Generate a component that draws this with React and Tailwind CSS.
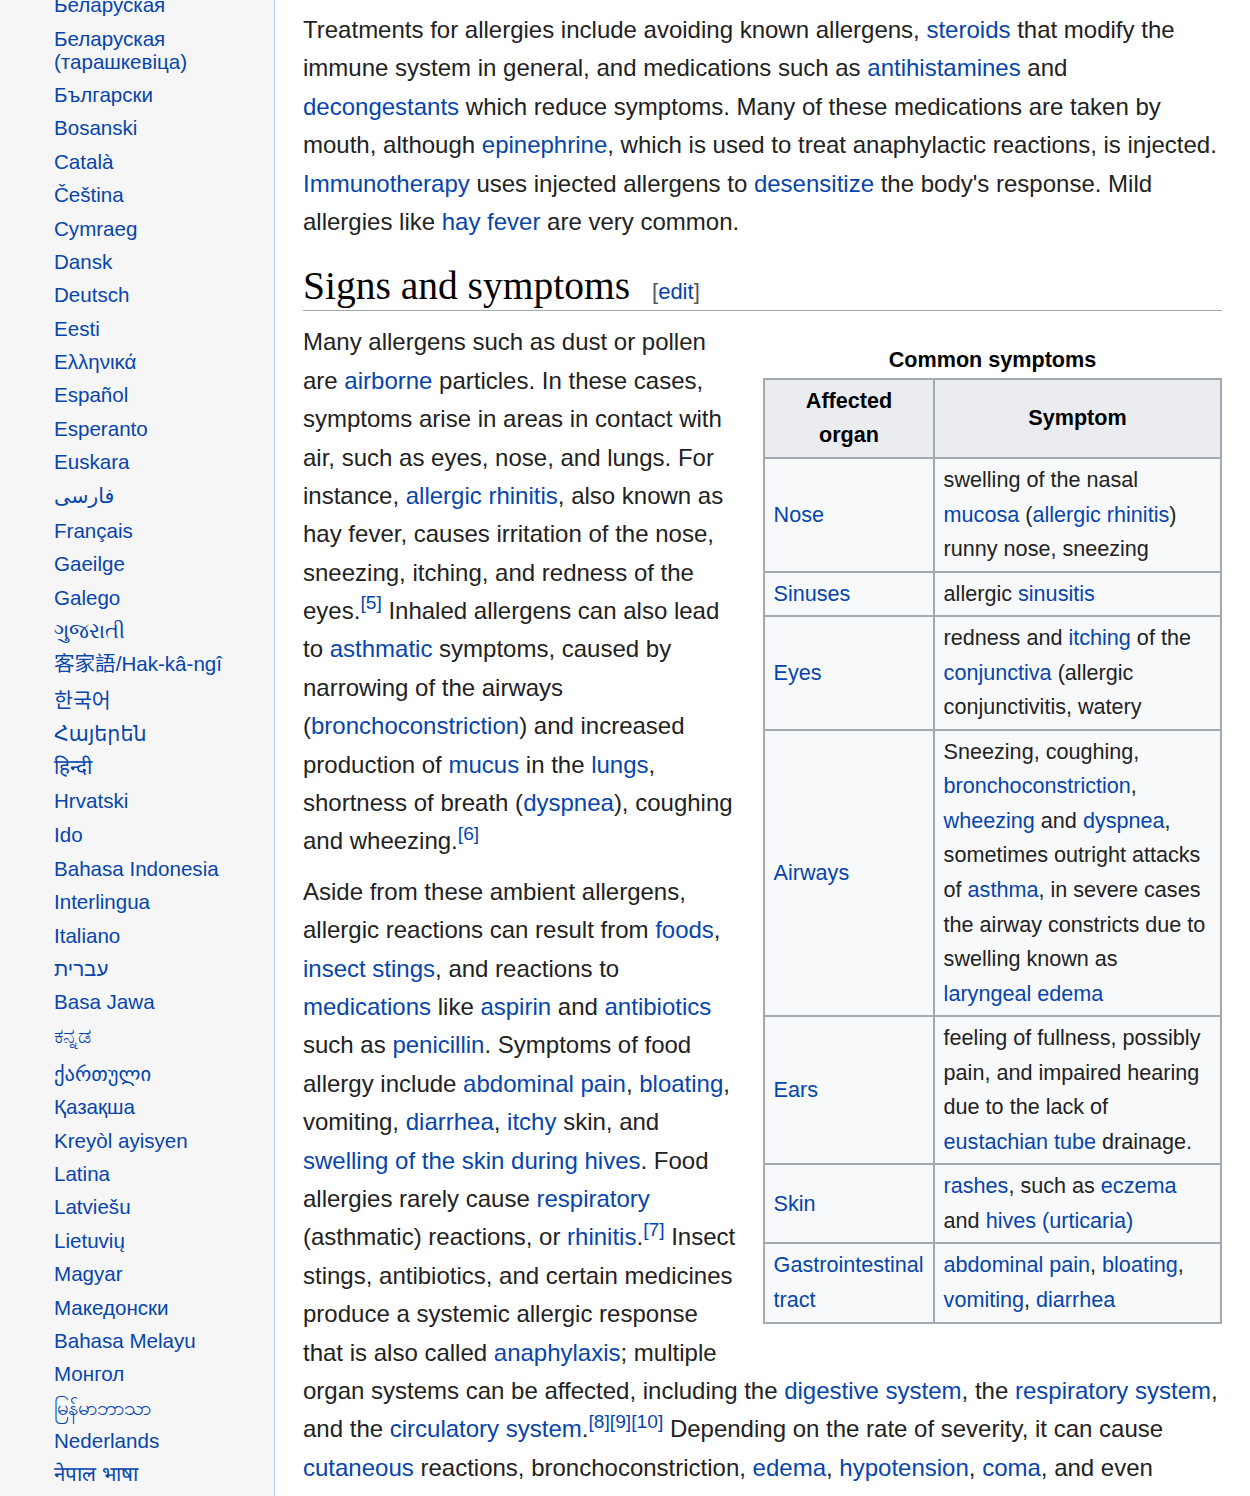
const languages = [
  { name: "Беларуская" },
  { name: "Беларуская (тарашкевіца)" },
  { name: "Български" },
  { name: "Bosanski" },
  { name: "Català" },
  { name: "Čeština" },
  { name: "Cymraeg" },
  { name: "Dansk" },
  { name: "Deutsch" },
  { name: "Eesti" },
  { name: "Ελληνικά" },
  { name: "Español" },
  { name: "Esperanto" },
  { name: "Euskara" },
  { name: "فارسی", cls: "pb-[7px]" },
  { name: "Français" },
  { name: "Gaeilge" },
  { name: "Galego" },
  { name: "ગુજરાતી" },
  { name: "客家語/Hak-kâ-ngî", cls: "pb-[8px]" },
  { name: "한국어" },
  { name: "Հայերեն" },
  { name: "हिन्दी" },
  { name: "Hrvatski", cls: "pb-[6.5px]" },
  { name: "Ido" },
  { name: "Bahasa Indonesia" },
  { name: "Interlingua" },
  { name: "Italiano" },
  { name: "עברית" },
  { name: "Basa Jawa" },
  { name: "ಕನ್ನಡ", cls: "pb-[10px]" },
  { name: "ქართული" },
  { name: "Қазақша" },
  { name: "Kreyòl ayisyen" },
  { name: "Latina" },
  { name: "Latviešu" },
  { name: "Lietuvių" },
  { name: "Magyar" },
  { name: "Македонски" },
  { name: "Bahasa Melayu" },
  { name: "Монгол" },
  { name: "မြန်မာဘာသာ" },
  { name: "Nederlands" },
  { name: "नेपाल भाषा" },
];

const L = ({ children }) => <a href="#" className="text-[#0645ad]">{children}</a>;

const Ref = ({ n }) => (
  <sup className="text-[80%] text-[#0645ad]">
    <a href="#">[{n}]</a>
  </sup>
);

const rows = [
  {
    organ: <L>Nose</L>,
    symptom: (
      <>
        swelling of the nasal <L>mucosa</L> (<L>allergic rhinitis</L>) runny nose, sneezing
      </>
    ),
  },
  { organ: <L>Sinuses</L>, symptom: <>allergic <L>sinusitis</L></> },
  {
    organ: <L>Eyes</L>,
    symptom: (
      <>
        redness and <L>itching</L> of the <L>conjunctiva</L> (allergic conjunctivitis, watery
      </>
    ),
  },
  {
    organ: <L>Airways</L>,
    symptom: (
      <>
        Sneezing, coughing, <L>bronchoconstriction</L>, <L>wheezing</L> and <L>dyspnea</L>,
        sometimes outright attacks of <L>asthma</L>, in severe cases the airway constricts due to
        swelling known as <L>laryngeal edema</L>
      </>
    ),
  },
  {
    organ: <L>Ears</L>,
    symptom: (
      <>
        feeling of fullness, possibly pain, and impaired hearing due to the lack of{" "}
        <L>eustachian tube</L> drainage.
      </>
    ),
  },
  {
    organ: <L>Skin</L>,
    symptom: (
      <>
        <L>rashes</L>, such as <L>eczema</L> and <L>hives (urticaria)</L>
      </>
    ),
  },
  {
    organ: <L>Gastrointestinal tract</L>,
    symptom: (
      <>
        <L>abdominal pain</L>, <L>bloating</L>, <L>vomiting</L>, <L>diarrhea</L>
      </>
    ),
  },
];

const SymptomTable = () => (
  <div className="float-right ml-[21.6px] mt-[20px] mb-[10.8px]">
    <table className="w-[459px] table-fixed border-collapse text-[21.6px] leading-[1.6] text-[#222]">
      <caption className="font-bold text-black">Common symptoms</caption>
      <colgroup>
        <col className="w-[170px]" />
        <col />
      </colgroup>
      <thead>
        <tr className="bg-[#eaecf0] text-black">
          <th className="border-2 border-[#a2a9b1] px-[9.6px] py-[4px] font-bold">
            Affected
            <br />
            organ
          </th>
          <th className="border-2 border-[#a2a9b1] px-[9.6px] py-[4px] font-bold">Symptom</th>
        </tr>
      </thead>
      <tbody>
        {rows.map((r, i) => (
          <tr key={i} className="bg-[#f8f9fa]">
            <td className="border-2 border-[#a2a9b1] pl-[8.6px] pr-[9.6px] py-[4px]">{r.organ}</td>
            <td className="border-2 border-[#a2a9b1] pl-[8.6px] pr-[10px] py-[4px]">{r.symptom}</td>
          </tr>
        ))}
      </tbody>
    </table>
  </div>
);

export default function App() {
  return (
    <div className="flex h-[1496px] overflow-hidden bg-white font-['Liberation_Sans','DejaVu_Sans','Noto_Sans_CJK_SC',sans-serif]">
      <aside className="w-[275px] shrink-0 border-r border-[#a7d7f9] bg-[#f6f6f6]">
        <ul className="-mt-[12px] pl-[54px] pr-[20px] text-[20.57px] leading-[1.125]">
          {languages.map((lang) => (
            <li key={lang.name} className={lang.cls ? `pt-[5.14px] ${lang.cls}` : "py-[5.14px]"}>
              <a href="#" className="text-[#0645ad]">
                {lang.name}
              </a>
            </li>
          ))}
        </ul>
      </aside>

      <main className="min-w-0 flex-1 px-[28px] text-[24px] leading-[1.6] text-[#222]">
        <p className="mt-[11px] mb-3">
          Treatments for allergies include avoiding known allergens, <L>steroids</L> that modify the
          immune system in general, and medications such as <L>antihistamines</L> and{" "}
          <L>decongestants</L> which reduce symptoms. Many of these medications are taken by mouth,
          although <L>epinephrine</L>, which is used to treat anaphylactic reactions, is injected.{" "}
          <L>Immunotherapy</L> uses injected allergens to <L>desensitize</L> the body's response.
          Mild allergies like <L>hay fever</L> are very common.
        </p>

        <h2 className="mt-[21px] border-b border-[#a2a9b1] font-['Liberation_Serif','Times_New_Roman',serif] text-[39.5px] leading-[48px] text-black">
          Signs and symptoms
          <span className="ml-[22px] font-['Liberation_Sans',sans-serif] text-[22px] leading-none text-[#54595d]">
            [<L>edit</L>]
          </span>
        </h2>

        <div>
          <SymptomTable />
          <p className="my-3">
            Many allergens such as dust or pollen are <L>airborne</L> particles. In these cases,
            symptoms arise in areas in contact with air, such as eyes, nose, and lungs. For
            instance, <L>allergic rhinitis</L>, also known as hay fever, causes irritation of the
            nose, sneezing, itching, and redness of the eyes.
            <Ref n={5} /> Inhaled allergens can also lead to <L>asthmatic</L> symptoms, caused by
            narrowing of the airways (<L>bronchoconstriction</L>) and increased production of{" "}
            <L>mucus</L> in the <L>lungs</L>, shortness of breath (<L>dyspnea</L>), coughing and
            wheezing.
            <Ref n={6} />
          </p>
          <p className="my-3">
            Aside from these ambient allergens, allergic reactions can result from <L>foods</L>,{" "}
            <L>insect stings</L>, and reactions to <L>medications</L> like <L>aspirin</L> and{" "}
            <L>antibiotics</L> such as <L>penicillin</L>. Symptoms of food allergy include{" "}
            <L>abdominal pain</L>, <L>bloating</L>, vomiting, <L>diarrhea</L>, <L>itchy</L> skin,
            and <L>swelling of the skin during hives</L>. Food allergies rarely cause{" "}
            <L>respiratory</L> (asthmatic) reactions, or <L>rhinitis</L>.
            <Ref n={7} /> Insect stings, antibiotics, and certain medicines produce a systemic
            allergic response that is also called <L>anaphylaxis</L>; multiple organ systems can be
            affected, including the <L>digestive system</L>, the <L>respiratory system</L>, and the{" "}
            <L>circulatory system</L>.
            <Ref n={8} />
            <Ref n={9} />
            <Ref n={10} /> Depending on the rate of severity, it can cause <L>cutaneous</L>{" "}
            reactions, bronchoconstriction, <L>edema</L>, <L>hypotension</L>, <L>coma</L>, and even
            death.
          </p>
        </div>
      </main>
    </div>
  );
}
